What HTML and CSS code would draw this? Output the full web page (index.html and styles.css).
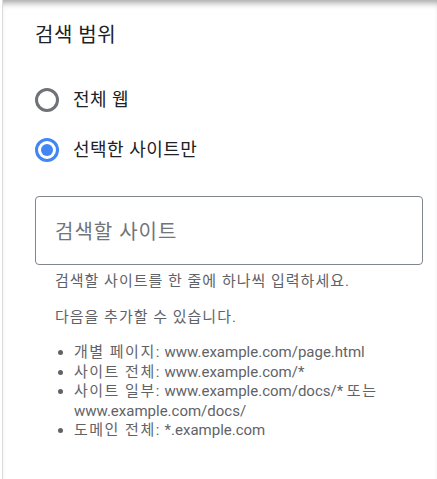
FILE: index.html
```html
<!DOCTYPE html>
<html lang="ko">
<head>
    <meta charset="UTF-8">
    <meta name="viewport" content="width=device-width, initial-scale=1.0">
    <title>검색 범위</title>
    <link rel="stylesheet" href="styles.css">
</head>
<body>
    <div class="panel">
        <h2 class="title">검색 범위</h2>

        <div class="options">
            <label class="option">
                <span class="radio"></span>
                <span>전체 웹</span>
            </label>
            <label class="option">
                <span class="radio checked"></span>
                <span>선택한 사이트만</span>
            </label>
        </div>

        <div class="field">
            <div class="input">검색할 사이트</div>
            <p class="hint">검색할 사이트를 한 줄에 하나씩 입력하세요.</p>
            <p class="hint">다음을 추가할 수 있습니다.</p>
            <ul class="examples">
                <li><span class="ko">개별 페이지:</span> www.example.com/page.html</li>
                <li><span class="ko">사이트 전체:</span> www.example.com/*</li>
                <li><span class="ko">사이트 일부:</span> www.example.com/docs/* <span class="ko">또는</span> www.example.com/docs/</li>
                <li><span class="ko">도메인 전체:</span> *.example.com</li>
            </ul>
        </div>
    </div>
</body>
</html>
```

FILE: styles.css
```css
body {
    margin: 0;
    font-family: Roboto, "Noto Sans CJK KR", sans-serif;
    background: #fff;
}
.panel {
    margin-left: 2px;
    min-height: 479px;
    box-sizing: border-box;
    border-left: 1px solid #dadce0;
    padding: 23px 15px 0 32px;
    box-shadow: inset 0 7px 6px -4px rgba(0, 0, 0, 0.35);
}
.title {
    margin: 0;
    font-size: 20px;
    font-weight: 400;
    letter-spacing: 0.5px;
    line-height: 24px;
    color: #202124;
}
.options {
    display: flex;
    flex-direction: column;
    gap: 26px;
    margin-top: 41px;
}
.option {
    display: flex;
    align-items: center;
    gap: 14px;
    font-size: 18px;
    letter-spacing: 0.5px;
    color: #202124;
    line-height: 24px;
}
.radio {
    width: 18px;
    height: 18px;
    border: 3px solid #6f7276;
    border-radius: 50%;
    box-sizing: content-box;
    flex-shrink: 0;
    position: relative;
}
.radio.checked {
    border-color: #4285f4;
}
.radio.checked::after {
    content: "";
    position: absolute;
    left: 3px;
    top: 3px;
    width: 12px;
    height: 12px;
    border-radius: 50%;
    background: #4285f4;
}
.field {
    margin-top: 34px;
}
.input {
    width: 388px;
    height: 69px;
    box-sizing: border-box;
    border: 1px solid #80868b;
    border-radius: 4px;
    padding: 0 19px;
    display: flex;
    align-items: center;
    font-size: 20px;
    letter-spacing: 1px;
    color: #70757a;
}
.hint {
    margin: 6px 0 0 20px;
    font-size: 15px;
    letter-spacing: 1px;
    line-height: 20px;
    color: #5f6368;
}
.hint + .hint {
    margin-top: 16px;
}
.examples {
    margin: 16px 0 0 20px;
    padding: 0 0 0 19px;
    font-size: 15px;
    line-height: 19.5px;
    color: #5f6368;
}
.ko {
    letter-spacing: 1.5px;
}
```
